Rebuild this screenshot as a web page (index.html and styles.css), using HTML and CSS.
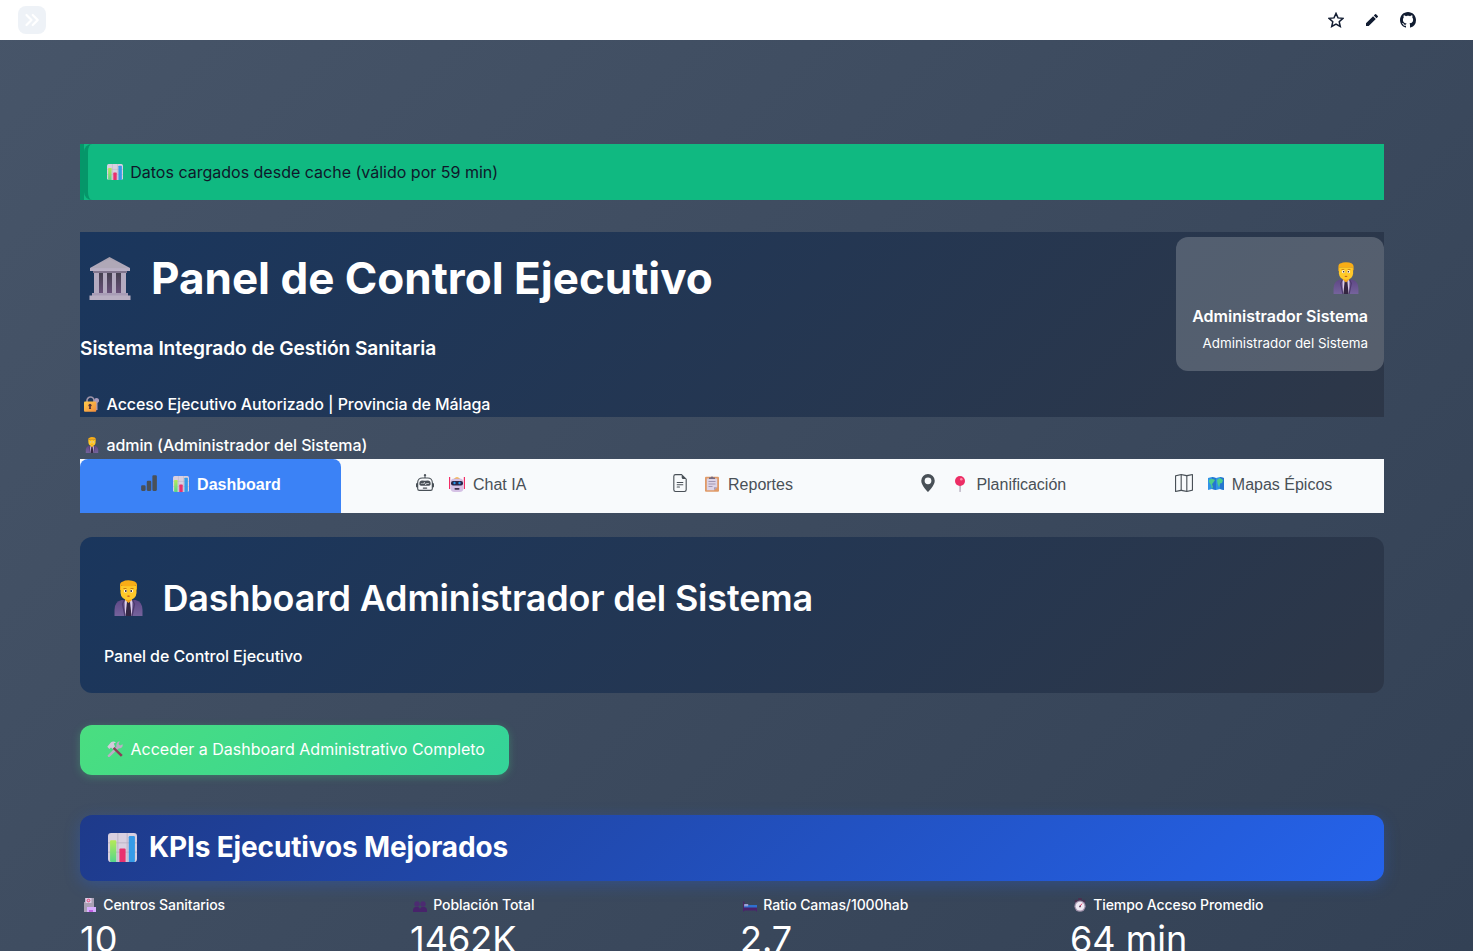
FILE: index.html
```html
<!DOCTYPE html>
<html lang="es">
<head>
<meta charset="utf-8">
<title>Panel de Control Ejecutivo</title>
<link rel="stylesheet" href="styles.css">
</head>
<body>
<svg class="defs" width="0" height="0" aria-hidden="true">
  <defs>
    <linearGradient id="g-green" x1="0" y1="0" x2="0" y2="1"><stop offset="0" stop-color="#b5ea57"/><stop offset="1" stop-color="#55d68b"/></linearGradient>
    <linearGradient id="g-stone" x1="0" y1="0" x2="0" y2="1"><stop offset="0" stop-color="#a69fac"/><stop offset="1" stop-color="#bcb2c7"/></linearGradient>
    <linearGradient id="g-shade" x1="0" y1="0" x2="0" y2="1"><stop offset="0" stop-color="#45404f"/><stop offset="1" stop-color="#6b517b"/></linearGradient>
    <linearGradient id="g-suit" x1="0" y1="0" x2="0" y2="1"><stop offset="0" stop-color="#5f4886"/><stop offset="1" stop-color="#75639c"/></linearGradient>
    <linearGradient id="g-lock" x1="0" y1="0" x2="1" y2="1"><stop offset="0" stop-color="#ffcc4b"/><stop offset="1" stop-color="#f28b3c"/></linearGradient>
    <symbol id="chart" viewBox="0 0 28 28">
      <rect width="28" height="28" rx="3" fill="#d9d0e0"/>
      <path d="M9.500 0v28M18.500 0v28M0 9.500h28M0 18.500h28" stroke="#b9afc4" stroke-width=".8"/>
      <path d="M2 8q0-1 1-1h4q1 0 1 1v20H3q-1 0-1-1z" fill="url(#g-green)"/>
      <path d="M11 16q0-1 1-1h4q1 0 1 1v12h-6z" fill="#e8316f"/>
      <path d="M20 4q0-1 1-1h4q1 0 1 1v23q0 1-1 1h-5z" fill="#369be8"/>
    </symbol>
    <symbol id="building" viewBox="0 0 42 43">
      <path d="M20.500 0 41 11v3H1v-3z" fill="url(#g-stone)"/>
      <path d="M20.500 2 38 11H3z" fill="#b0a8b7"/>
      <path d="M4 14h34v2H4z" fill="#81758d"/>
      <path d="M6 16h30v21H6z" fill="url(#g-shade)"/>
      <path d="M5 16h5v21H5zM14 16h4v21h-4zM23 16h4v21h-4zM32 16h5v21h-5z" fill="#b5abc0"/>
      <path d="M3 36h36v3H3z" fill="#a99db6"/>
      <path d="M.5 38.500h41V43H.5z" fill="#b9afc2"/>
    </symbol>
    <symbol id="worker" viewBox="0 0 28 36">
      <path d="M0 36v-6q0-8.500 7-10h14q7 1.500 7 10v6z" fill="url(#g-suit)"/>
      <path d="M10 20h8l-.5 16h-7z" fill="#dccdea"/>
      <path d="m12.500 21.500 1.500-1 1.500 1 1.500 14.500h-6z" fill="#342642"/>
      <path d="M10 20 8 24l2.500 12M18 20l2 4-2.500 12" fill="none" stroke="#4d3a6d" stroke-width="1.300"/>
      <path d="M10.500 16h7v4L14 23l-3.500-3z" fill="#f2a51d"/>
      <path d="M6 6h16v7q-.5 6.500-8 7-7.500-.5-8-7z" fill="#ffc929"/>
      <path d="M5.500 9V5q0-3 3-3.500Q10 .2 14 .2q8 .3 8.500 4.300V9l-1 1V5.700q-7.500 1.300-15 0V10h-1z" fill="#f9ad16"/>
      <path d="M9 8.500h3M16 8.500h3" stroke="#b96b0b" stroke-width=".8"/>
      <circle cx="11" cy="11" r="1.600" fill="#fff"/><circle cx="17" cy="11" r="1.600" fill="#fff"/>
      <circle cx="11.300" cy="11" r=".9" fill="#38211f"/><circle cx="16.700" cy="11" r=".9" fill="#38211f"/>
      <path d="M12.200 16q1.800-1 3.600 0-1.800 1.300-3.600 0" fill="#b7421d"/>
    </symbol>
    <symbol id="lock" viewBox="0 0 16 16">
      <path d="M3 7V4.500a3.500 3.500 0 0 1 7 0V7" fill="none" stroke="#9e93a8" stroke-width="1.700"/>
      <path d="M12.500 2a2.600 2.600 0 0 1 1 5v7h-1.800V7A2.600 2.600 0 0 1 12.500 2" fill="#a99bbd"/>
      <rect y="5.500" width="12.300" height="10.300" rx="1" fill="url(#g-lock)"/>
      <circle cx="6" cy="9.300" r="1.500" fill="#563138"/><path d="M5.400 10h1.200l.5 3H4.900z" fill="#563138"/>
    </symbol>
    <symbol id="bot" viewBox="0 0 16 16">
      <path d="M.6 1v12M15.400 1v12" stroke="#f32d66" stroke-width="1.200"/><path d="M4.500 3.200q3.500-4 7 0z" fill="#f7a51e"/>
      <rect x="1.500" y="2.500" width="13" height="13.500" rx="4" fill="#d5c1e5"/>
      <rect x="2" y="5" width="12" height="4.500" rx="2" fill="#2b2548"/>
      <circle cx="5.500" cy="7" r="1.200" fill="#2795e9"/><circle cx="10.500" cy="7" r="1.200" fill="#2795e9"/>
      <rect x="5.500" y="12" width="5" height="1.700" rx=".8" fill="#40304d"/>
    </symbol>
    <symbol id="clipboard" viewBox="0 0 14 16">
      <rect y=".8" width="14" height="15" rx="1" fill="#e09a67"/><path d="M1.800 2.500h10.400v8.700L9 14.300H1.800z" fill="#dcd3e5"/>
      <path d="M12.200 11.200H9v3.100z" fill="#a99bb6"/><path d="M4 3V1.500h1.500Q7-.7 8.500 1.500H10V3z" fill="#766a80"/>
      <path d="M3.500 5.500h7M3.500 8h7M3.500 10.500h4" stroke="#9b8fac" stroke-width=".9"/>
    </symbol>
    <symbol id="pin" viewBox="0 0 12 16">
      <path d="M5.500 8h1.200l-.2 8h-.9z" fill="#9c8da5"/><circle cx="6" cy="5" r="5" fill="#ec2d65"/><circle cx="7.300" cy="3.200" r="1.300" fill="#ff8ba9"/>
    </symbol>
    <symbol id="worldmap" viewBox="0 0 16 14">
      <path d="m0 1 4-1 4 1 4-1 4 1v12l-4-1-4 1-4-1-4 1z" fill="#2f93e6"/><path d="m4 0 4 1v12l-4-1zM12 0l4 1v12l-4-1z" fill="#2576cf"/>
      <path d="M1 3q3-2 6 0L5 6 4 7l1 3-1 2-1-4-2-3zM9 3l3-2 3 2-1 3-2 .5-1 4-1.500-4z" fill="#4ccd8b"/>
    </symbol>
    <symbol id="tools" viewBox="0 0 16 16">
      <path d="m.5 14.500 9-9Q8.500 2 12 .3l.7.300L11.500 3 13 4.500l2.600-1.200q.8 4-4 4.200L2.500 16H1.200z" fill="#b9afc4"/>
      <path d="m6 4.800 9.700 9.200-1.800 1.800L4.500 6.500z" fill="#8b3d57"/>
      <path d="M.3 5.800 4 1.200Q6.500-.3 9 1.500L6.800 2.600 8 5.500 5.500 8 4 6.500 2.300 8z" fill="#d5cbdc"/>
    </symbol>
    <symbol id="hospital" viewBox="0 0 12 14">
      <path d="M1 0h9v14H0V4h1z" fill="#aaa0b4"/><path d="M1.500 0h6v5h-6z" fill="#dccce7"/><circle cx="4.500" cy="2.500" r="1.300" fill="none" stroke="#e84274"/>
      <path d="M3 9h9v5H3z" fill="#d8afff"/><path d="M5 12h4v2H5z" fill="#c05ee1"/>
    </symbol>
    <symbol id="people" viewBox="0 0 14 11">
      <circle cx="4" cy="3" r="2.700" fill="#4c2b71"/><circle cx="10" cy="3" r="2.700" fill="#4c2b71"/>
      <path d="M0 11V9q.3-3 3-3h1.500Q7 6 7 9q0-3 2.500-3H11q2.700 0 3 3v2z" fill="#48236b"/>
    </symbol>
    <symbol id="bed" viewBox="0 0 14 10">
      <path d="M0 0h1.500v9.500H0z" fill="#4c2761"/><path d="M1 3.500h13V7H1z" fill="#2d70cf"/><path d="M1.200 2.500h4v2.300h-4z" fill="#9d9fd6"/><path d="M0 6h14v4h-1V9H1v1H0z" fill="#4b226c"/>
    </symbol>
    <symbol id="clock" viewBox="0 0 12 15">
      <path d="M4 0h4v3H4zM0 3l2-1.500L4 3 1 6zM12 3l-2-1.500L8 3l3 3z" fill="#49304f"/>
      <circle cx="6" cy="8.800" r="6" fill="#a394ad"/><circle cx="6" cy="8.800" r="4.700" fill="#eee8f2"/><path d="m6 8.800 2.200-2.800" stroke="#e4315d"/><circle cx="6" cy="9" r="1" fill="#5a435e"/>
    </symbol>
  </defs>
</svg>

<header class="toolbar">
  <button class="expand" aria-label="Expandir">
    <svg width="16" height="14" viewBox="0 0 16 14"><path d="m2.500 2 5 5-5 5M8.700 2l5 5-5 5" fill="none" stroke="#fff" stroke-width="2.200" stroke-linecap="round" stroke-linejoin="round"/></svg>
  </button>
  <nav class="actions">
    <svg width="16" height="16" viewBox="0 0 16 16"><path d="m8 1.400 2 4.500 4.900.5-3.700 3.300 1.100 4.800L8 12l-4.300 2.500 1.100-4.800L1.100 6.400 6 5.900z" fill="none" stroke="#111c31" stroke-width="1.450"/></svg>
    <svg width="16" height="16" viewBox="0 0 16 16"><path d="M2 11.300V14h2.700l7.100-7.100-2.700-2.700zM13.800 4.900a.7.700 0 0 0 0-1l-1.700-1.700a.7.700 0 0 0-1 0L9.800 3.500l2.700 2.700z" fill="#111c31"/></svg>
    <svg width="16" height="16" viewBox="0 0 16 16"><path d="M8 0C3.580 0 0 3.580 0 8c0 3.540 2.290 6.530 5.470 7.590.4.070.55-.17.55-.38 0-.19-.01-.82-.01-1.490-2.010.37-2.530-.49-2.690-.94-.09-.23-.48-.94-.82-1.130-.28-.15-.68-.52-.01-.53.63-.01 1.080.58 1.230.82.72 1.210 1.870.87 2.330.66.07-.52.28-.87.51-1.070-1.780-.2-3.640-.89-3.640-3.950 0-.87.31-1.590.82-2.150-.08-.2-.36-1.020.08-2.120 0 0 .67-.21 2.200.82.64-.18 1.320-.27 2-.27s1.360.09 2 .27c1.530-1.040 2.200-.82 2.200-.82.44 1.100.16 1.920.08 2.120.51.56.82 1.270.82 2.150 0 3.070-1.870 3.750-3.650 3.950.29.25.54.73.54 1.480 0 1.070-.01 1.930-.01 2.200 0 .21.15.46.55.38A8.010 8.010 0 0 0 16 8c0-4.420-3.580-8-8-8" fill="#111c31"/></svg>
  </nav>
</header>

<main class="content">
  <div class="alert"><div class="alert-body"><svg class="emoji e16"><use href="#chart"/></svg><span>Datos cargados desde cache (válido por 59 min)</span></div></div>

  <section class="hero">
    <div class="hero-text">
      <h1><svg class="emoji e-building"><use href="#building"/></svg><span>Panel de Control Ejecutivo</span></h1>
      <h3>Sistema Integrado de Gestión Sanitaria</h3>
      <p class="access"><svg class="emoji e16"><use href="#lock"/></svg><span>Acceso Ejecutivo Autorizado | Provincia de Málaga</span></p>
    </div>
    <aside class="profile">
      <svg class="emoji"><use href="#worker"/></svg>
      <strong>Administrador Sistema</strong>
      <small>Administrador del Sistema</small>
    </aside>
  </section>

  <p class="session"><svg class="emoji e16"><use href="#worker"/></svg><span>admin (Administrador del Sistema)</span></p>

  <nav class="tabs">
    <a class="tab active"><svg class="tab-icon" viewBox="0 0 16 16"><path d="M1 11a1 1 0 0 1 1-1h2a1 1 0 0 1 1 1v3a1 1 0 0 1-1 1H2a1 1 0 0 1-1-1zm5-4a1 1 0 0 1 1-1h2a1 1 0 0 1 1 1v7a1 1 0 0 1-1 1H7a1 1 0 0 1-1-1zm5-5a1 1 0 0 1 1-1h2a1 1 0 0 1 1 1v12a1 1 0 0 1-1 1h-2a1 1 0 0 1-1-1z"/></svg><svg class="emoji e16"><use href="#chart"/></svg><span>Dashboard</span></a>
    <a class="tab"><svg class="tab-icon" viewBox="0 0 16 16"><path d="M6 12.500a.5.5 0 0 1 .5-.5h3a.5.5 0 0 1 0 1h-3a.5.5 0 0 1-.5-.5M3 8.062C3 6.760 4.235 5.765 5.530 5.886a26.600 26.600 0 0 0 4.940 0C11.765 5.765 13 6.760 13 8.062v1.157a.93.93 0 0 1-.765.935c-.845.147-2.340.346-4.235.346s-3.390-.2-4.235-.346A.93.93 0 0 1 3 9.219zm4.542-.827a.25.25 0 0 0-.217.068l-.92.9a25 25 0 0 1-1.871-.183.25.25 0 0 0-.068.495c.55.076 1.232.149 2.020.193a.25.25 0 0 0 .189-.071l.754-.736.847 1.710a.25.25 0 0 0 .404.062l.932-.97a25 25 0 0 0 1.922-.188.25.25 0 0 0-.068-.495c-.538.074-1.207.145-1.980.189a.25.25 0 0 0-.166.076l-.754.785-.842-1.700a.25.25 0 0 0-.182-.135"/><path d="M8.500 1.866a1 1 0 1 0-1 0V3h-2A4.500 4.500 0 0 0 1 7.500V8a1 1 0 0 0-1 1v2a1 1 0 0 0 1 1v1a2 2 0 0 0 2 2h10a2 2 0 0 0 2-2v-1a1 1 0 0 0 1-1V9a1 1 0 0 0-1-1v-.5A4.500 4.500 0 0 0 10.500 3h-2zM14 7.500V13a1 1 0 0 1-1 1H3a1 1 0 0 1-1-1V7.500A3.500 3.500 0 0 1 5.500 4h5A3.500 3.500 0 0 1 14 7.500"/></svg><svg class="emoji e16"><use href="#bot"/></svg><span>Chat IA</span></a>
    <a class="tab"><svg class="tab-icon" viewBox="0 0 16 16"><path d="M5.500 7a.5.5 0 0 0 0 1h5a.5.5 0 0 0 0-1zM5 9.500a.5.5 0 0 1 .5-.5h5a.5.5 0 0 1 0 1h-5a.5.5 0 0 1-.5-.5m0 2a.5.5 0 0 1 .5-.5h2a.5.5 0 0 1 0 1h-2a.5.5 0 0 1-.5-.5"/><path d="M9.500 0H4a2 2 0 0 0-2 2v12a2 2 0 0 0 2 2h8a2 2 0 0 0 2-2V4.500zm0 1v2A1.500 1.500 0 0 0 11 4.500h2V14a1 1 0 0 1-1 1H4a1 1 0 0 1-1-1V2a1 1 0 0 1 1-1z"/></svg><svg class="emoji e16"><use href="#clipboard"/></svg><span>Reportes</span></a>
    <a class="tab"><svg class="tab-icon" viewBox="0 0 16 16"><path d="M8 16s6-5.686 6-10A6 6 0 0 0 2 6c0 4.314 6 10 6 10m0-7a3 3 0 1 1 0-6 3 3 0 0 1 0 6"/></svg><svg class="emoji e16"><use href="#pin"/></svg><span>Planificación</span></a>
    <a class="tab"><svg class="tab-icon" viewBox="0 0 16 16"><path fill-rule="evenodd" d="M15.817.113A.5.5 0 0 1 16 .5v14a.5.5 0 0 1-.402.490l-5 1a.5.5 0 0 1-.196 0L5.500 15.010l-4.902.980A.5.5 0 0 1 0 15.500v-14a.5.5 0 0 1 .402-.490l5-1a.5.5 0 0 1 .196 0L10.500.990l4.902-.980a.5.5 0 0 1 .415.103M10 1.910l-4-.8v12.980l4 .8zm1 12.980 4-.8V1.110l-4 .8zm-6-.8V1.110l-4 .8v12.980z"/></svg><svg class="emoji e16"><use href="#worldmap"/></svg><span>Mapas Épicos</span></a>
  </nav>

  <section class="dash-card">
    <h2><svg class="emoji"><use href="#worker"/></svg><span>Dashboard Administrador del Sistema</span></h2>
    <p>Panel de Control Ejecutivo</p>
  </section>

  <button class="cta"><svg class="emoji e16"><use href="#tools"/></svg><span>Acceder a Dashboard Administrativo Completo</span></button>

  <h2 class="kpi-title"><svg class="emoji"><use href="#chart"/></svg><span>KPIs Ejecutivos Mejorados</span></h2>

  <section class="metrics">
    <div class="metric"><div class="label"><svg class="emoji"><use href="#hospital"/></svg><span>Centros Sanitarios</span></div><div class="value">10</div></div>
    <div class="metric"><div class="label"><svg class="emoji low"><use href="#people"/></svg><span>Población Total</span></div><div class="value">1462K</div></div>
    <div class="metric"><div class="label"><svg class="emoji low"><use href="#bed"/></svg><span>Ratio Camas/1000hab</span></div><div class="value">2.7</div></div>
    <div class="metric"><div class="label"><svg class="emoji"><use href="#clock"/></svg><span>Tiempo Acceso Promedio</span></div><div class="value">64 min</div></div>
  </section>
</main>
</body>
</html>
```
FILE: styles.css
```css
* { box-sizing: border-box; }
body {
  margin: 0;
  height: 951px;
  overflow: hidden;
  font: 400 16px/26px Inter, sans-serif;
  color: #fff;
  background: linear-gradient(135deg, #475569 0%, #334155 100%);
}
h1, h2, h3, p { margin: 0; }
button { border: 0; font: inherit; color: inherit; }
svg { flex: none; display: block; }
span, strong, small { white-space: nowrap; }
.defs { position: absolute; }
.e16 { width: 16px; height: 16px; }

.toolbar {
  display: flex;
  align-items: center;
  justify-content: space-between;
  height: 40px;
  padding: 0 57px 0 18px;
  background: #fff;
}
.expand {
  display: grid;
  place-items: center;
  width: 28px;
  height: 28px;
  padding: 0;
  border-radius: 8px;
  background: #eef2f7;
}
.actions { display: flex; gap: 20px; }

.content { padding: 104px 89px 0 80px; }

.alert { border-left: 4px solid #059669; background: #10b981; }
.alert-body {
  display: flex;
  align-items: center;
  gap: 7.25px;
  height: 56px;
  padding-left: 19px;
  border-left: 4px solid #059669;
  border-radius: 8px;
  color: #0f172a;
}

.hero {
  display: flex;
  justify-content: space-between;
  height: 185px;
  margin-top: 32px;
  background: linear-gradient(135deg, #1a365d 0%, #2d3748 100%);
}
.hero h1 {
  display: flex;
  align-items: center;
  gap: 20px;
  height: 93px;
  padding-left: 9px;
  font-size: 44px;
  font-weight: 700;
}
.hero h1 span { padding-bottom: 2px; }
.e-building { width: 42px; height: 43px; }
.hero h3 { height: 46px; font-size: 19.2px; font-weight: 600; line-height: 46px; letter-spacing: -.09px; }
.access, .session { display: flex; align-items: center; gap: 7px; padding-left: 3.5px; font-weight: 500; letter-spacing: -.09px; }
.access { height: 66px; }
.session { height: 42px; padding-top: 14px; }
.profile {
  display: flex;
  flex-direction: column;
  align-items: flex-end;
  width: 208px;
  height: 134px;
  margin-top: 5px;
  padding: 25px 16px 0;
  border-radius: 12px;
  background: rgba(255, 255, 255, .2);
}
.profile .emoji { width: 26px; height: 32px; margin-right: 9px; }
.profile strong { margin-top: 9px; font-weight: 600; }
.profile small { margin-top: 1px; font-size: 13.36px; }

.tabs { display: grid; grid-template-columns: repeat(5, 1fr); height: 54px; background: #f8fafc; }
.tab {
  display: flex;
  align-items: center;
  justify-content: center;
  padding-bottom: 2px;
  color: #495057;
  font-family: "Liberation Sans", Arial, sans-serif;
}
.tab-icon { width: 18px; height: 18px; margin: 0 15px 4px 0; fill: #495057; }
.tab .emoji { margin: 0 8px 2px 0; }
.tab.active { border-radius: 8px 8px 0 0; background: #3b82f6; font-weight: 700; }
.tab.active span { color: #fff; }

.dash-card {
  height: 156px;
  margin-top: 24px;
  padding: 24px;
  border-radius: 12px;
  background: linear-gradient(135deg, #1a365d 0%, #2d3748 100%);
}
.dash-card h2 { display: flex; align-items: center; gap: 19.5px; height: 74px; padding-left: 10px; font-size: 36px; font-weight: 600; letter-spacing: -.18px; }
.dash-card .emoji { width: 29px; height: 36px; }
.dash-card p { padding-top: 8px; font-weight: 500; letter-spacing: -.08px; }

.cta {
  display: flex;
  align-items: center;
  gap: 7.5px;
  width: 429px;
  height: 50px;
  margin-top: 32px;
  padding: 0 0 2px 27px;
  border-radius: 12px;
  background: linear-gradient(135deg, #4ade80 0%, #34d399 100%);
  box-shadow: 0 2px 8px rgba(74, 222, 128, .3);
}

.kpi-title {
  display: flex;
  align-items: center;
  gap: 12px;
  height: 66px;
  margin-top: 40px;
  padding: 0 0 2px 28px;
  border-radius: 12px;
  background: linear-gradient(135deg, #1e3a8a 0%, #2563eb 100%);
  box-shadow: 0 4px 16px rgba(37, 99, 235, .3);
  font-size: 28px;
  font-weight: 700;
  letter-spacing: -.14px;
}
.kpi-title .emoji { width: 29px; height: 29px; }

.metrics { display: grid; grid-template-columns: repeat(4, 1fr); gap: 16px; padding-top: 14px; }
.label { display: flex; align-items: center; gap: 6.25px; height: 20px; padding-left: 3px; font-size: 14px; font-weight: 500; line-height: 20px; letter-spacing: -.09px; }
.label .emoji { width: 14px; height: 14px; }
.label .low { height: 11px; margin-top: 3px; }
.value { font-size: 36px; line-height: 48px; }
```
